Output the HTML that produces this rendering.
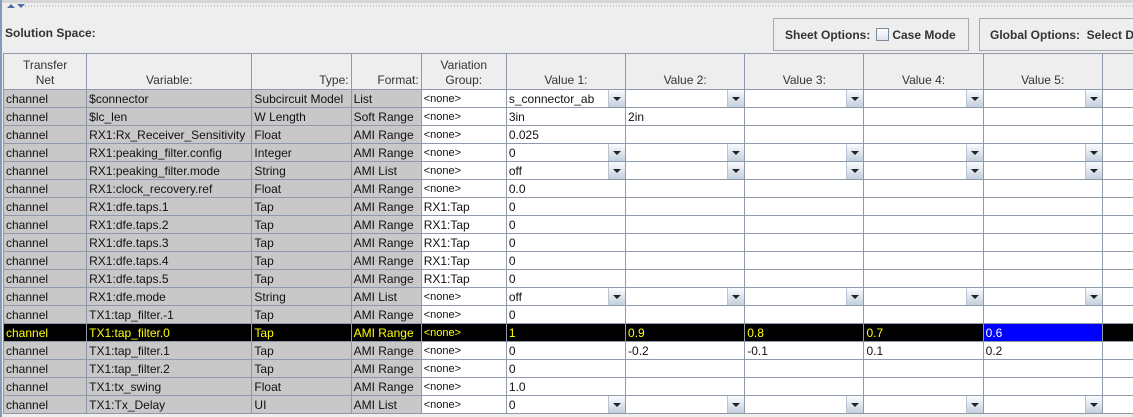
<!DOCTYPE html>
<html><head><style>
body{margin:0;width:1133px;height:417px;overflow:hidden;background:#eeeeee;font-family:"Liberation Sans",sans-serif;font-size:12px;position:relative}
.topbar{position:absolute;left:0;top:0;width:1133px;height:3px;background:#d6d6d6}
.lbar{position:absolute;left:0;top:0;width:2px;height:417px;background:#7f9db9}
.dots{position:absolute;left:24px;top:5px;width:1109px;height:2px;background-image:radial-gradient(#9aa6b4 0.6px,transparent 0.8px);background-size:3px 2px}
.arr{position:absolute;top:4px;width:0;height:0;border-left:4px solid transparent;border-right:4px solid transparent}
.ss{position:absolute;left:5px;top:26px;font-weight:bold;font-size:12px;color:#333}
.box{position:absolute;top:18px;height:33px;border:1px solid #a8a8a8;box-sizing:border-box;font-weight:bold;font-size:12px;color:#333;line-height:33px;white-space:nowrap;overflow:hidden}
.cb{display:inline-block;width:11px;height:11px;border:1px solid #7a8a99;background:linear-gradient(#fff,#dce4ee);vertical-align:-2px;margin:0 3px 0 6px}
table{position:absolute;left:3px;top:53px;border-collapse:collapse;table-layout:fixed;width:1150px}
td,th{border:1px solid #8e9aa8;padding:0 2px;height:17px;font-size:12px;white-space:nowrap;overflow:hidden;position:relative;font-weight:normal;color:#111}
th{height:34px;background:#eeeeee;color:#333;text-align:center;vertical-align:bottom;line-height:15px;padding-bottom:1px}
td.g{background:#c8c8c8}
td{background:#fff}
td.s{font-size:11px}
tr.sel td{background:#000;color:#ffff00}
tr.sel td.b{background:#0000ff;color:#fff}
.dd{position:absolute;right:0;top:0;width:17px;height:17px;background:linear-gradient(#fafcff,#c3cfdd);border-left:1px solid #b8c4d2;box-sizing:border-box}
.dd:after{content:"";position:absolute;left:4px;top:7px;border-left:4px solid transparent;border-right:4px solid transparent;border-top:4px solid #222}
</style></head><body>
<div class="topbar"></div><div class="lbar"></div>
<div class="arr" style="left:7px;border-bottom:4px solid #4a6fa0"></div>
<div class="arr" style="left:17px;border-top:4px solid #4a6fa0"></div>
<div class="dots"></div>
<div class="ss">Solution Space:</div>
<div class="box" style="left:773px;width:196px;padding-left:11px">Sheet Options:<span class="cb"></span><span style="font-weight:bold">Case Mode</span></div>
<div class="box" style="left:979px;width:160px;padding-left:10px">Global Options:&nbsp; Select DC</div>
<table>
<colgroup><col style="width:83px"><col style="width:165px"><col style="width:99px"><col style="width:70px"><col style="width:85px"><col style="width:119px"><col style="width:119px"><col style="width:119px"><col style="width:119px"><col style="width:119px"><col style="width:50px"></colgroup>
<tr><th>Transfer<br>Net</th><th>Variable:</th><th style="text-align:right">Type:</th><th style="text-align:right">Format:</th><th>Variation<br>Group:</th><th>Value 1:</th><th>Value 2:</th><th>Value 3:</th><th>Value 4:</th><th>Value 5:</th><th></th></tr>
<tr><td class="g">channel</td><td class="g">$connector</td><td class="g">Subcircuit Model</td><td class="g">List</td><td class="s">&lt;none&gt;</td><td>s_connector_ab<span class="dd"></span></td><td><span class="dd"></span></td><td><span class="dd"></span></td><td><span class="dd"></span></td><td><span class="dd"></span></td><td></td></tr>
<tr><td class="g">channel</td><td class="g">$lc_len</td><td class="g">W Length</td><td class="g">Soft Range</td><td class="s">&lt;none&gt;</td><td>3in</td><td>2in</td><td></td><td></td><td></td><td></td></tr>
<tr><td class="g">channel</td><td class="g">RX1:Rx_Receiver_Sensitivity</td><td class="g">Float</td><td class="g">AMI Range</td><td class="s">&lt;none&gt;</td><td>0.025</td><td></td><td></td><td></td><td></td><td></td></tr>
<tr><td class="g">channel</td><td class="g">RX1:peaking_filter.config</td><td class="g">Integer</td><td class="g">AMI Range</td><td class="s">&lt;none&gt;</td><td>0<span class="dd"></span></td><td><span class="dd"></span></td><td><span class="dd"></span></td><td><span class="dd"></span></td><td><span class="dd"></span></td><td></td></tr>
<tr><td class="g">channel</td><td class="g">RX1:peaking_filter.mode</td><td class="g">String</td><td class="g">AMI List</td><td class="s">&lt;none&gt;</td><td>off<span class="dd"></span></td><td><span class="dd"></span></td><td><span class="dd"></span></td><td><span class="dd"></span></td><td><span class="dd"></span></td><td></td></tr>
<tr><td class="g">channel</td><td class="g">RX1:clock_recovery.ref</td><td class="g">Float</td><td class="g">AMI Range</td><td class="s">&lt;none&gt;</td><td>0.0</td><td></td><td></td><td></td><td></td><td></td></tr>
<tr><td class="g">channel</td><td class="g">RX1:dfe.taps.1</td><td class="g">Tap</td><td class="g">AMI Range</td><td>RX1:Tap</td><td>0</td><td></td><td></td><td></td><td></td><td></td></tr>
<tr><td class="g">channel</td><td class="g">RX1:dfe.taps.2</td><td class="g">Tap</td><td class="g">AMI Range</td><td>RX1:Tap</td><td>0</td><td></td><td></td><td></td><td></td><td></td></tr>
<tr><td class="g">channel</td><td class="g">RX1:dfe.taps.3</td><td class="g">Tap</td><td class="g">AMI Range</td><td>RX1:Tap</td><td>0</td><td></td><td></td><td></td><td></td><td></td></tr>
<tr><td class="g">channel</td><td class="g">RX1:dfe.taps.4</td><td class="g">Tap</td><td class="g">AMI Range</td><td>RX1:Tap</td><td>0</td><td></td><td></td><td></td><td></td><td></td></tr>
<tr><td class="g">channel</td><td class="g">RX1:dfe.taps.5</td><td class="g">Tap</td><td class="g">AMI Range</td><td>RX1:Tap</td><td>0</td><td></td><td></td><td></td><td></td><td></td></tr>
<tr><td class="g">channel</td><td class="g">RX1:dfe.mode</td><td class="g">String</td><td class="g">AMI List</td><td class="s">&lt;none&gt;</td><td>off<span class="dd"></span></td><td><span class="dd"></span></td><td><span class="dd"></span></td><td><span class="dd"></span></td><td><span class="dd"></span></td><td></td></tr>
<tr><td class="g">channel</td><td class="g">TX1:tap_filter.-1</td><td class="g">Tap</td><td class="g">AMI Range</td><td class="s">&lt;none&gt;</td><td>0</td><td></td><td></td><td></td><td></td><td></td></tr>
<tr class="sel"><td>channel</td><td>TX1:tap_filter.0</td><td>Tap</td><td>AMI Range</td><td class="s">&lt;none&gt;</td><td>1</td><td>0.9</td><td>0.8</td><td>0.7</td><td class="b">0.6</td><td></td></tr>
<tr><td class="g">channel</td><td class="g">TX1:tap_filter.1</td><td class="g">Tap</td><td class="g">AMI Range</td><td class="s">&lt;none&gt;</td><td>0</td><td>-0.2</td><td>-0.1</td><td>0.1</td><td>0.2</td><td></td></tr>
<tr><td class="g">channel</td><td class="g">TX1:tap_filter.2</td><td class="g">Tap</td><td class="g">AMI Range</td><td class="s">&lt;none&gt;</td><td>0</td><td></td><td></td><td></td><td></td><td></td></tr>
<tr><td class="g">channel</td><td class="g">TX1:tx_swing</td><td class="g">Float</td><td class="g">AMI Range</td><td class="s">&lt;none&gt;</td><td>1.0</td><td></td><td></td><td></td><td></td><td></td></tr>
<tr><td class="g">channel</td><td class="g">TX1:Tx_Delay</td><td class="g">UI</td><td class="g">AMI List</td><td class="s">&lt;none&gt;</td><td>0<span class="dd"></span></td><td><span class="dd"></span></td><td><span class="dd"></span></td><td><span class="dd"></span></td><td><span class="dd"></span></td><td></td></tr>
</table>
</body></html>
